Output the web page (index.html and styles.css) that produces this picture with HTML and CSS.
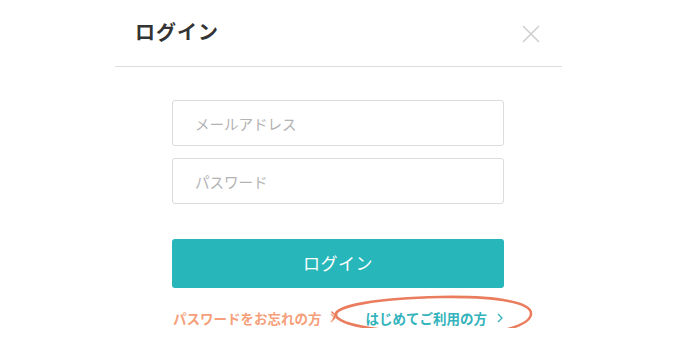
FILE: index.html
```html
<!DOCTYPE html>
<html lang="ja">
<head>
<meta charset="utf-8">
<title>ログイン</title>
<link rel="stylesheet" href="styles.css">
</head>
<body>
<div class="modal">
  <div class="modal-header">
    <h1 class="modal-title">ログイン</h1>
    <button class="close" aria-label="閉じる">
      <svg width="18" height="18" viewBox="0 0 18 18"><path d="M1 1 L17 17 M17 1 L1 17" stroke="#cfcfcf" stroke-width="1.6" fill="none"/></svg>
    </button>
  </div>
  <form class="form">
    <input class="field" type="email" placeholder="メールアドレス">
    <input class="field" type="password" placeholder="パスワード">
    <button class="submit" type="button">ログイン</button>
    <div class="links">
      <a class="link link-forgot" href="#">パスワードをお忘れの方<svg class="chev" width="6" height="10" viewBox="0 0 6 10"><path d="M1 1 L5 5 L1 9" stroke="currentColor" stroke-width="1.3" fill="none"/></svg></a>
      <a class="link link-first" href="#">はじめてご利用の方<svg class="chev" width="6" height="10" viewBox="0 0 6 10"><path d="M1 1 L5 5 L1 9" stroke="currentColor" stroke-width="1.3" fill="none"/></svg></a>
      <svg class="circle" width="210" height="55" viewBox="328 290 210 55">
        <path d="M428 331 C385 331 342 325 336 315 C331 305 380 297 440 296 C500 295 532 302 531 313 C530 327 485 336 425 338" stroke="#ea7d5d" stroke-width="2.6" fill="none" stroke-linecap="round"/>
        <path d="M336 315 L332 311" stroke="#ea7d5d" stroke-width="1.6" fill="none" stroke-linecap="round"/>
        <path d="M333 318 L337 313" stroke="#ea7d5d" stroke-width="1.4" fill="none" stroke-linecap="round"/>
      </svg>
    </div>
  </form>
</div>
</body>
</html>
```
FILE: styles.css
```css
* { box-sizing: border-box; }
html, body { margin: 0; padding: 0; background: #fff; }
body {
  font-family: "Noto Sans CJK JP", "Noto Sans", sans-serif;
  color: #333;
}
.modal {
  width: 447px;
  margin-left: 115px;
}
.modal-header {
  height: 67px;
  border-bottom: 1px solid #dcdcdc;
  display: flex;
  align-items: center;
  justify-content: space-between;
  padding: 0 22px 0 20px;
}
.modal-title {
  margin: 0;
  font-size: 20px;
  font-weight: 700;
  letter-spacing: 1px;
  color: #333;
  line-height: 1;
  margin-top: -2px;
}
.close {
  border: 0;
  background: none;
  padding: 0;
  width: 18px;
  height: 18px;
  display: flex;
  margin-top: 1px;
}
.form {
  padding: 33px 58px 0 57px;
  display: flex;
  flex-direction: column;
}
.field {
  height: 46px;
  border: 1px solid #dcdcdc;
  border-radius: 3px;
  padding: 0 0 0 22px;
  font-family: inherit;
  font-size: 14.5px;
  color: #333;
  outline: none;
}
.field + .field { margin-top: 12px; }
.field::placeholder { color: #b3b3b3; }
.submit {
  margin-top: 35px;
  height: 49px;
  border: 0;
  border-radius: 3px;
  background: #27b6ba;
  color: #fff;
  font-family: inherit;
  font-size: 17px;
  letter-spacing: 0.5px;
  padding-bottom: 3px;
}
.links {
  position: relative;
  margin-top: 20px;
  height: 20px;
  display: flex;
  align-items: center;
  padding-left: 1px;
}
.link {
  text-decoration: none;
  font-size: 13.5px;
  font-weight: 700;
  display: flex;
  align-items: center;
  line-height: 20px;
}
.chev { margin-left: 8px; }
.link-forgot { color: #f5a07a; }
.link-first { color: #33b3bb; margin-left: 30px; }
.link-first .chev { margin-left: 10px; }
.circle {
  position: absolute;
  left: 156px;
  top: -17px;
  pointer-events: none;
}
```
